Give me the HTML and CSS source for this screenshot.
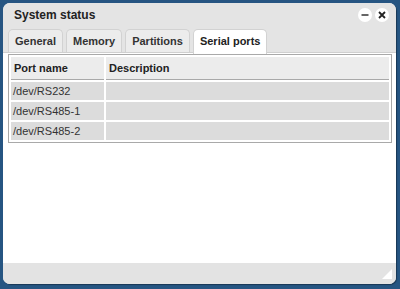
FILE: index.html
```html
<!DOCTYPE html>
<html lang="en">
<head>
  <meta charset="UTF-8">
  <title>System status</title>
  <link rel="stylesheet" href="styles.css">
</head>
<body>
  <div class="window">
    <div class="titlebar">
      <span class="title">System status</span>
      <span class="win-btn">
        <svg width="10" height="10" viewBox="0 0 10 10"><path d="M1.5 5h7" stroke="#333" stroke-width="1.6"/></svg>
      </span>
      <span class="win-btn">
        <svg width="10" height="10" viewBox="0 0 10 10"><path d="M2 2l6 6M8 2l-6 6" stroke="#222" stroke-width="1.8"/></svg>
      </span>
    </div>
    <div class="tabs">
      <div class="tab">General</div>
      <div class="tab">Memory</div>
      <div class="tab">Partitions</div>
      <div class="tab active">Serial ports</div>
    </div>
    <div class="content">
      <table>
        <thead>
          <tr><th class="col-name">Port name</th><th>Description</th></tr>
        </thead>
        <tbody>
          <tr><td>/dev/RS232</td><td></td></tr>
          <tr><td>/dev/RS485-1</td><td></td></tr>
          <tr><td>/dev/RS485-2</td><td></td></tr>
        </tbody>
      </table>
    </div>
    <div class="statusbar">
      <svg class="grip" width="10" height="10" viewBox="0 0 10 10"><path d="M10 0V10H0Z" fill="#fff"/></svg>
    </div>
  </div>
</body>
</html>
```

FILE: styles.css
```css
body {
  margin: 0;
  padding: 3px 4px 4px 3px;
  background: #265582;
  font-family: Tahoma, "DejaVu Sans", sans-serif;
  color: #222;
}
.window {
  height: 281px;
  display: flex;
  flex-direction: column;
  background: #fff;
  border-radius: 7px;
  overflow: hidden;
  box-shadow: 1px 1px 1px rgba(0,0,0,0.35);
}
.titlebar {
  height: 24px;
  display: flex;
  align-items: center;
  gap: 3px;
  padding: 0 7px 0 11px;
  background: #e4e4e4;
}
.title {
  flex: 1;
  font-family: "Liberation Sans", Arial, sans-serif;
  font-weight: bold;
  font-size: 12px;
  color: #222;
}
.win-btn {
  width: 14px;
  height: 14px;
  border-radius: 50%;
  background: #fff;
  display: flex;
  align-items: center;
  justify-content: center;
}
.tabs {
  display: flex;
  gap: 3px;
  padding: 2px 5px 0;
  background: #e4e4e4;
  border-bottom: 1px solid #cfcfcf;
  height: 23px;
}
.tab {
  padding: 0 6px;
  line-height: 22px;
  font-family: "Liberation Sans", Arial, sans-serif;
  font-weight: bold;
  font-size: 11px;
  color: #333;
  background: #ececec;
  border: 1px solid #d2d2d2;
  border-bottom: none;
  border-radius: 5px 5px 0 0;
}
.tab.active {
  background: #fff;
  color: #222;
  height: 24px;
  margin-bottom: -1px;
}
.content {
  flex: 1;
  padding: 1px 4px 0 5px;
}
table {
  width: 100%;
  border: 1px solid #a9a9a9;
  border-spacing: 2px;
  font-family: "Liberation Sans", Arial, sans-serif;
  font-size: 11px;
}
th {
  text-align: left;
  background: #ececec;
  height: 22px;
  padding: 0 3px;
  font-weight: bold;
  color: #222;
}
thead tr th {
  border-bottom: 1px solid #a9a9a9;
}
.col-name {
  width: 87px;
}
td {
  background: #dcdcdc;
  height: 18px;
  padding: 0 2px;
  color: #333;
}
.statusbar {
  box-sizing: border-box;
  height: 21px;
  background: #e3e3e3;
  display: flex;
  justify-content: flex-end;
  align-items: flex-end;
  padding: 0 4px 5px 0;
}
```
